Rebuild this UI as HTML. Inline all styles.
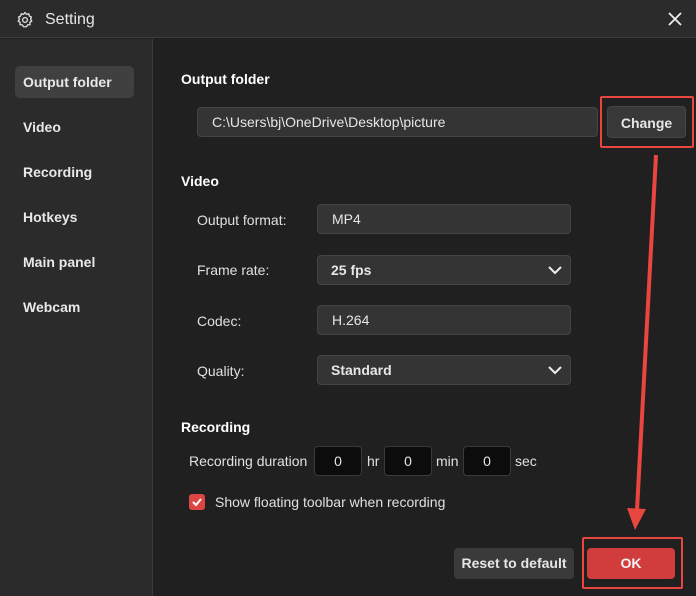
<!DOCTYPE html>
<html><head><meta charset="utf-8"><style>
*{box-sizing:border-box;margin:0;padding:0}
body{width:696px;height:596px;background:#202020;font-family:"Liberation Sans",sans-serif;color:#e6e6e6;position:relative;overflow:hidden;font-size:14px}
.abs{position:absolute}
.title{left:0;top:0;width:696px;height:38px;background:#2b2b2b;border-bottom:1px solid #3c3c3c}
.side{left:0;top:39px;width:153px;height:557px;background:#2b2b2b;border-right:1px solid #3a3a3a}
.nav{left:15px;width:119px;height:32px;line-height:32px;padding-left:8px;font-weight:bold;font-size:14px;color:#e8e8e8}
.h{font-weight:bold;font-size:14px;color:#fff}
.box{background:#343434;border:1px solid #444;border-radius:4px;height:30px;line-height:28px;padding-left:14px;font-size:14px;color:#e6e6e6}
.lab{font-size:14px;color:#e0e0e0}
.num{background:#0c0c0c;border:1px solid #3a3a3a;border-radius:4px;width:48px;height:30px;line-height:28px;text-align:center;font-size:14px}
.btn{border-radius:4px;text-align:center;font-weight:bold;font-size:14px}
.red{border:2px solid #e8463e}
</style></head><body>
<div class="abs title"></div>
<svg class="abs" style="left:16px;top:11px" width="18" height="18" viewBox="0 0 24 24" fill="none" stroke="#ddd" stroke-width="1.8"><path d="M12 2l2 2.5 3-.8.8 3L20.5 8 19.5 11 21 13.5l-2.5 1.5.2 3.2-3.2.2L14 21h-4l-1.5-2.5-3.2-.2.2-3.2L3 13.5 4.5 11 3.5 8l2.7-1.3.8-3 3 .8z" stroke-linejoin="round"/><circle cx="12" cy="12" r="3.2"/></svg>
<div class="abs" style="left:45px;top:11px;font-size:16px;color:#e6e6e6">Setting</div>
<svg class="abs" style="left:668px;top:12px" width="14" height="14" viewBox="0 0 14 14" stroke="#eee" stroke-width="1.8"><path d="M1 1L13 13M13 1L1 13"/></svg>
<div class="abs side"></div>
<div class="abs nav" style="top:66px;background:#404040;border-radius:5px">Output folder</div>
<div class="abs nav" style="top:111px">Video</div>
<div class="abs nav" style="top:156px">Recording</div>
<div class="abs nav" style="top:201px">Hotkeys</div>
<div class="abs nav" style="top:246px">Main panel</div>
<div class="abs nav" style="top:291px">Webcam</div>

<div class="abs h" style="left:181px;top:71px">Output folder</div>
<div class="abs box" style="left:197px;top:107px;width:401px">C:\Users\bj\OneDrive\Desktop\picture</div>
<div class="abs btn" style="left:607px;top:106px;width:79px;height:32px;line-height:32px;background:#383838;border:1px solid #464646">Change</div>
<div class="abs red" style="left:600px;top:96px;width:94px;height:52px;border-radius:2px"></div>

<div class="abs h" style="left:181px;top:173px">Video</div>
<div class="abs lab" style="left:197px;top:212px">Output format:</div>
<div class="abs box" style="left:317px;top:204px;width:254px">MP4</div>
<div class="abs lab" style="left:197px;top:262px">Frame rate:</div>
<div class="abs box" style="left:317px;top:255px;width:254px;font-weight:bold;padding-left:13px">25 fps</div>
<div class="abs lab" style="left:197px;top:313px">Codec:</div>
<div class="abs box" style="left:317px;top:305px;width:254px">H.264</div>
<div class="abs lab" style="left:197px;top:363px">Quality:</div>
<div class="abs box" style="left:317px;top:355px;width:254px;font-weight:bold;padding-left:13px">Standard</div>
<svg class="abs" style="left:548px;top:266px" width="14" height="9" viewBox="0 0 14 9" fill="none" stroke="#eee" stroke-width="2"><path d="M1 1l6 6 6-6"/></svg>
<svg class="abs" style="left:548px;top:366px" width="14" height="9" viewBox="0 0 14 9" fill="none" stroke="#eee" stroke-width="2"><path d="M1 1l6 6 6-6"/></svg>

<div class="abs h" style="left:181px;top:419px">Recording</div>
<div class="abs lab" style="left:189px;top:453px">Recording duration</div>
<div class="abs num" style="left:314px;top:446px">0</div>
<div class="abs lab" style="left:367px;top:453px">hr</div>
<div class="abs num" style="left:384px;top:446px">0</div>
<div class="abs lab" style="left:436px;top:453px">min</div>
<div class="abs num" style="left:463px;top:446px">0</div>
<div class="abs lab" style="left:515px;top:453px">sec</div>
<div class="abs" style="left:189px;top:494px;width:16px;height:16px;background:#dd4545;border-radius:3px"></div>
<svg class="abs" style="left:191px;top:496px" width="12" height="12" viewBox="0 0 12 12" fill="none" stroke="#fff" stroke-width="2"><path d="M2 6l3 3 5-6"/></svg>
<div class="abs lab" style="left:215px;top:494px">Show floating toolbar when recording</div>

<div class="abs btn" style="left:454px;top:548px;width:120px;height:31px;line-height:31px;background:#3a3a3a">Reset to default</div>
<div class="abs btn" style="left:587px;top:548px;width:88px;height:31px;line-height:31px;background:#d13c3c;color:#f3f3f3">OK</div>
<div class="abs red" style="left:582px;top:537px;width:101px;height:52px;border-radius:2px"></div>

<svg class="abs" style="left:0;top:0" width="696" height="596"><path d="M656 155L637 510" stroke="#e8463e" stroke-width="4"/><path d="M627 508L646 509L635 530Z" fill="#e8463e"/></svg>
</body></html>
